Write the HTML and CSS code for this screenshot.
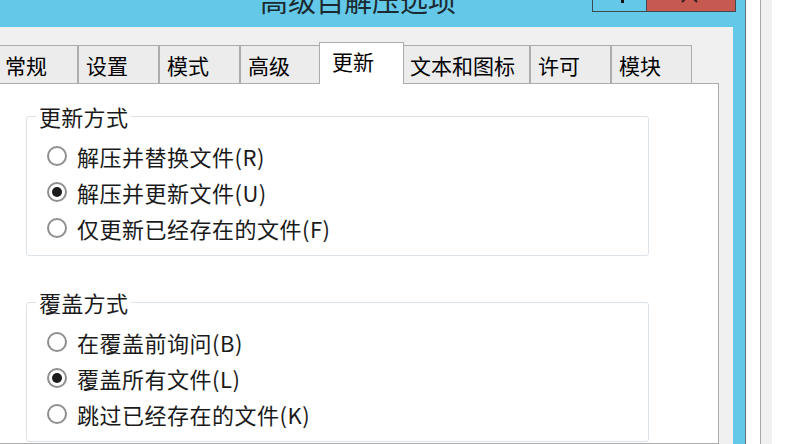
FILE: index.html
```html
<!DOCTYPE html>
<html lang="zh-CN">
<head>
<meta charset="utf-8">
<title>高级自解压选项</title>
<link rel="stylesheet" href="styles.css">
</head>
<body>
<div class="desk">
  <div class="window">
    <div class="titlebar">
      <div class="title">高级自解压选项</div>
      <div class="caption-btns">
        <div class="cbtn help">
          <svg width="53" height="11" viewBox="0 0 53 11"><rect x="28" y="0" width="3" height="3" fill="#111"/></svg>
        </div>
        <div class="cbtn close">
          <svg width="88" height="11" viewBox="0 0 88 11"><path d="M35 -13 L50 2 M50 -13 L35 2" stroke="#3a2020" stroke-width="2.2" fill="none"/></svg>
        </div>
      </div>
    </div>
    <div class="client">
      <div class="tabs">
        <div class="tab">常规</div>
        <div class="tab">设置</div>
        <div class="tab">模式</div>
        <div class="tab">高级</div>
        <div class="tab active">更新</div>
        <div class="tab wide">文本和图标</div>
        <div class="tab">许可</div>
        <div class="tab">模块</div>
      </div>
      <div class="panel">
        <fieldset class="group">
          <legend>更新方式</legend>
          <div class="opt"><span class="radio"></span><span class="lbl">解压并替换文件(R)</span></div>
          <div class="opt"><span class="radio on"></span><span class="lbl">解压并更新文件(U)</span></div>
          <div class="opt"><span class="radio"></span><span class="lbl">仅更新已经存在的文件(F)</span></div>
        </fieldset>
        <fieldset class="group second">
          <legend>覆盖方式</legend>
          <div class="opt"><span class="radio"></span><span class="lbl">在覆盖前询问(B)</span></div>
          <div class="opt"><span class="radio on"></span><span class="lbl">覆盖所有文件(L)</span></div>
          <div class="opt"><span class="radio"></span><span class="lbl">跳过已经存在的文件(K)</span></div>
        </fieldset>
      </div>
    </div>
  </div>
  <div class="gap"></div>
  <div class="strip"></div>
</div>
</body>
</html>
```

FILE: styles.css
```css
html, body {
  margin: 0;
  padding: 0;
  background: #ffffff;
}

body {
  font-family: "Noto Sans CJK SC", "Noto Sans", sans-serif;
  color: #111;
}

.desk {
  display: flex;
  width: 789px;
  height: 444px;
  overflow: hidden;
  background: #ffffff;
}

.window {
  flex: none;
  width: 745px;
  height: 444px;
  background: #64c8e8;
  border-right: 1px solid #6a6f72;
  display: flex;
  flex-direction: column;
}

.titlebar {
  flex: none;
  height: 27px;
  display: flex;
  align-items: flex-start;
}

.title {
  flex: 1;
  padding-left: 260px;
  margin-top: -14px;
  font-size: 28px;
  line-height: 28px;
  color: #1b2a30;
  white-space: nowrap;
}

.caption-btns {
  display: flex;
  margin-right: 9px;
}

.cbtn {
  height: 11px;
  border: 1px solid #3f4a50;
  border-top: none;
  overflow: hidden;
}

.cbtn svg {
  display: block;
}

.help {
  width: 53px;
  background: #64c8e8;
}

.close {
  width: 88px;
  background: #c75a50;
  border-left: none;
}

.client {
  flex: 1;
  margin-right: 12px;
  background: #f0f0f0;
  padding-top: 15px;
  display: flex;
  flex-direction: column;
  min-height: 0;
}

.tabs {
  display: flex;
  align-items: flex-end;
  margin-left: -3px;
}

.tab {
  box-sizing: border-box;
  min-width: 81px;
  height: 38px;
  padding: 0 14px 0 7px;
  border: 1px solid #acacac;
  border-bottom: none;
  background: #ececec;
  font-size: 21px;
  line-height: 38px;
  color: #000;
  white-space: nowrap;
}

.tab.active {
  position: relative;
  z-index: 1;
  height: 42px;
  min-width: 85px;
  margin: 0 -2px -1px -2px;
  padding: 0 10px 0 12px;
  background: #ffffff;
  line-height: 36px;
}

.panel {
  flex: 1;
  margin: 0 14px 0 -3px;
  background: #ffffff;
  border: 1px solid #acacac;
  padding: 21px 0 0 28px;
}

.group {
  box-sizing: border-box;
  width: 623px;
  margin: 0;
  padding: 11px 9px 9px 9px;
  border: 1px solid #dbe2e8;
  border-radius: 3px;
  font-size: 22px;
  line-height: 22px;
  color: #1a1a1a;
}

.group.second {
  margin-top: 35px;
}

.group legend {
  padding: 0 3px;
  letter-spacing: 0.3px;
}

.opt {
  display: flex;
  align-items: center;
  height: 36px;
  padding-left: 11px;
}

.radio {
  box-sizing: border-box;
  flex: none;
  width: 20px;
  height: 20px;
  border-radius: 50%;
  border: 2px solid #8f8f8f;
  background: #ffffff;
  margin-right: 10px;
  display: flex;
  align-items: center;
  justify-content: center;
}

.radio.on::after {
  content: "";
  width: 10px;
  height: 10px;
  border-radius: 50%;
  background: #1c1c1c;
}

.lbl {
  white-space: nowrap;
  letter-spacing: 0.5px;
}

.gap {
  flex: none;
  width: 14px;
}

.strip {
  flex: none;
  width: 11px;
  border-left: 1px solid #a6a6a6;
  background: #f0f0f0;
}
```
